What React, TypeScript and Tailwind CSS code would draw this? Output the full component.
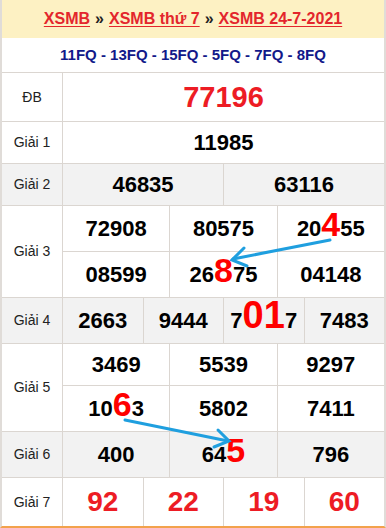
import React from "react";

const RED = "text-[#ed1c24]";

function Big({ children, size }: { children: React.ReactNode; size?: string }) {
  return <span className={`${size ?? "text-[34px]"} leading-[0] text-[#ff0000]`}>{children}</span>;
}

function Row({
  label,
  h,
  grey,
  children,
}: {
  label: string;
  h: string;
  grey?: boolean;
  children: React.ReactNode;
}) {
  return (
    <div className={`flex border-b border-[#dbd6d1] ${h} ${grey ? "bg-[#f2f2f2]" : "bg-white"}`}>
      <div className="w-[61px] shrink-0 border-r border-[#dbd6d1] flex items-center justify-center text-[14px] text-[#222]">
        {label}
      </div>
      <div className="flex-1 flex flex-col">{children}</div>
    </div>
  );
}

function Cells({ items, cls, h }: { items: React.ReactNode[]; cls?: string; h?: string }) {
  return (
    <div className={`flex ${h ?? "flex-1"}`}>
      {items.map((it, i) => (
        <div
          key={i}
          className={`flex-1 flex items-center justify-center font-bold ${cls ?? "text-[22px] leading-[24px] text-black"} ${
            i > 0 ? "border-l border-[#dbd6d1]" : ""
          }`}
        >
          <span>{it}</span>
        </div>
      ))}
    </div>
  );
}

export default function App() {
  return (
    <div className="relative w-[386px] h-[528px] font-['Liberation_Sans',Arial,sans-serif] border-l-2 border-r-2 border-b-2 border-l-[#e0dcd8] border-r-[#e0dcd8] border-b-[#f2a24c] flex flex-col overflow-hidden">
      <div className="h-[38px] shrink-0 bg-[#fdf1c3] flex items-center justify-center text-[16px] font-bold">
        <span className="text-[#e3262c] underline underline-offset-2">XSMB</span>
        <span className="mx-[5px] text-[#222]">»</span>
        <span className="text-[#e3262c] underline underline-offset-2">XSMB thứ 7</span>
        <span className="mx-[5px] text-[#222]">»</span>
        <span className="text-[#e3262c] underline underline-offset-2">XSMB 24-7-2021</span>
      </div>
      <div className="h-[35px] shrink-0 bg-white border-b border-[#dbd6d1] flex items-center justify-center text-[15px] font-bold text-[#12198a]">
        11FQ - 13FQ - 15FQ - 5FQ - 7FQ - 8FQ
      </div>
      <Row label="ĐB" h="h-[49px]">
        <Cells items={["77196"]} cls={`text-[29px] leading-none ${RED}`} />
      </Row>
      <Row label="Giải 1" h="h-[42px]">
        <Cells items={["11985"]} />
      </Row>
      <Row label="Giải 2" h="h-[42px]" grey>
        <Cells items={["46835", "63116"]} />
      </Row>
      <Row label="Giải 3" h="h-[92px]">
        <div className="flex h-[46px] border-b border-[#dbd6d1]">
          <Cells
            h="flex-1"
            items={[
              "72908",
              "80575",
              <>
                20<Big>4</Big>55
              </>,
            ]}
          />
        </div>
        <Cells
          h="flex-1"
          items={[
            "08599",
            <>
              26<Big>8</Big>75
            </>,
            "04148",
          ]}
        />
      </Row>
      <Row label="Giải 4" h="h-[46px]" grey>
        <Cells
          items={[
            "2663",
            "9444",
            <>
              7<Big size="text-[38px]">01</Big>7
            </>,
            "7483",
          ]}
        />
      </Row>
      <Row label="Giải 5" h="h-[88px]">
        <div className="flex h-[42px] border-b border-[#dbd6d1]">
          <Cells h="flex-1" items={["3469", "5539", "9297"]} />
        </div>
        <Cells
          h="flex-1"
          items={[
            <>
              10<Big>6</Big>3
            </>,
            "5802",
            "7411",
          ]}
        />
      </Row>
      <Row label="Giải 6" h="h-[46px]" grey>
        <Cells
          items={[
            "400",
            <>
              64<Big>5</Big>
            </>,
            "796",
          ]}
        />
      </Row>
      <div className="flex flex-1 bg-white">
        <div className="w-[61px] shrink-0 border-r border-[#dbd6d1] flex items-center justify-center text-[14px] text-[#222]">
          Giải 7
        </div>
        <div className="flex-1 flex">
          <Cells items={["92", "22", "19", "60"]} cls={`text-[28px] leading-none ${RED}`} />
        </div>
      </div>
      <svg
        className="absolute left-[-2px] top-0 pointer-events-none"
        width="386"
        height="528"
        viewBox="0 0 386 528"
      >
        <g stroke="#1f9fdf" strokeWidth="3" strokeLinecap="round" fill="none">
          <line x1="330" y1="240" x2="233" y2="259" />
          <polyline points="244,248 232,260 247,266" />
          <line x1="125" y1="420" x2="228" y2="441" />
          <polyline points="218,430 229,441 214,447" />
        </g>
      </svg>
    </div>
  );
}
